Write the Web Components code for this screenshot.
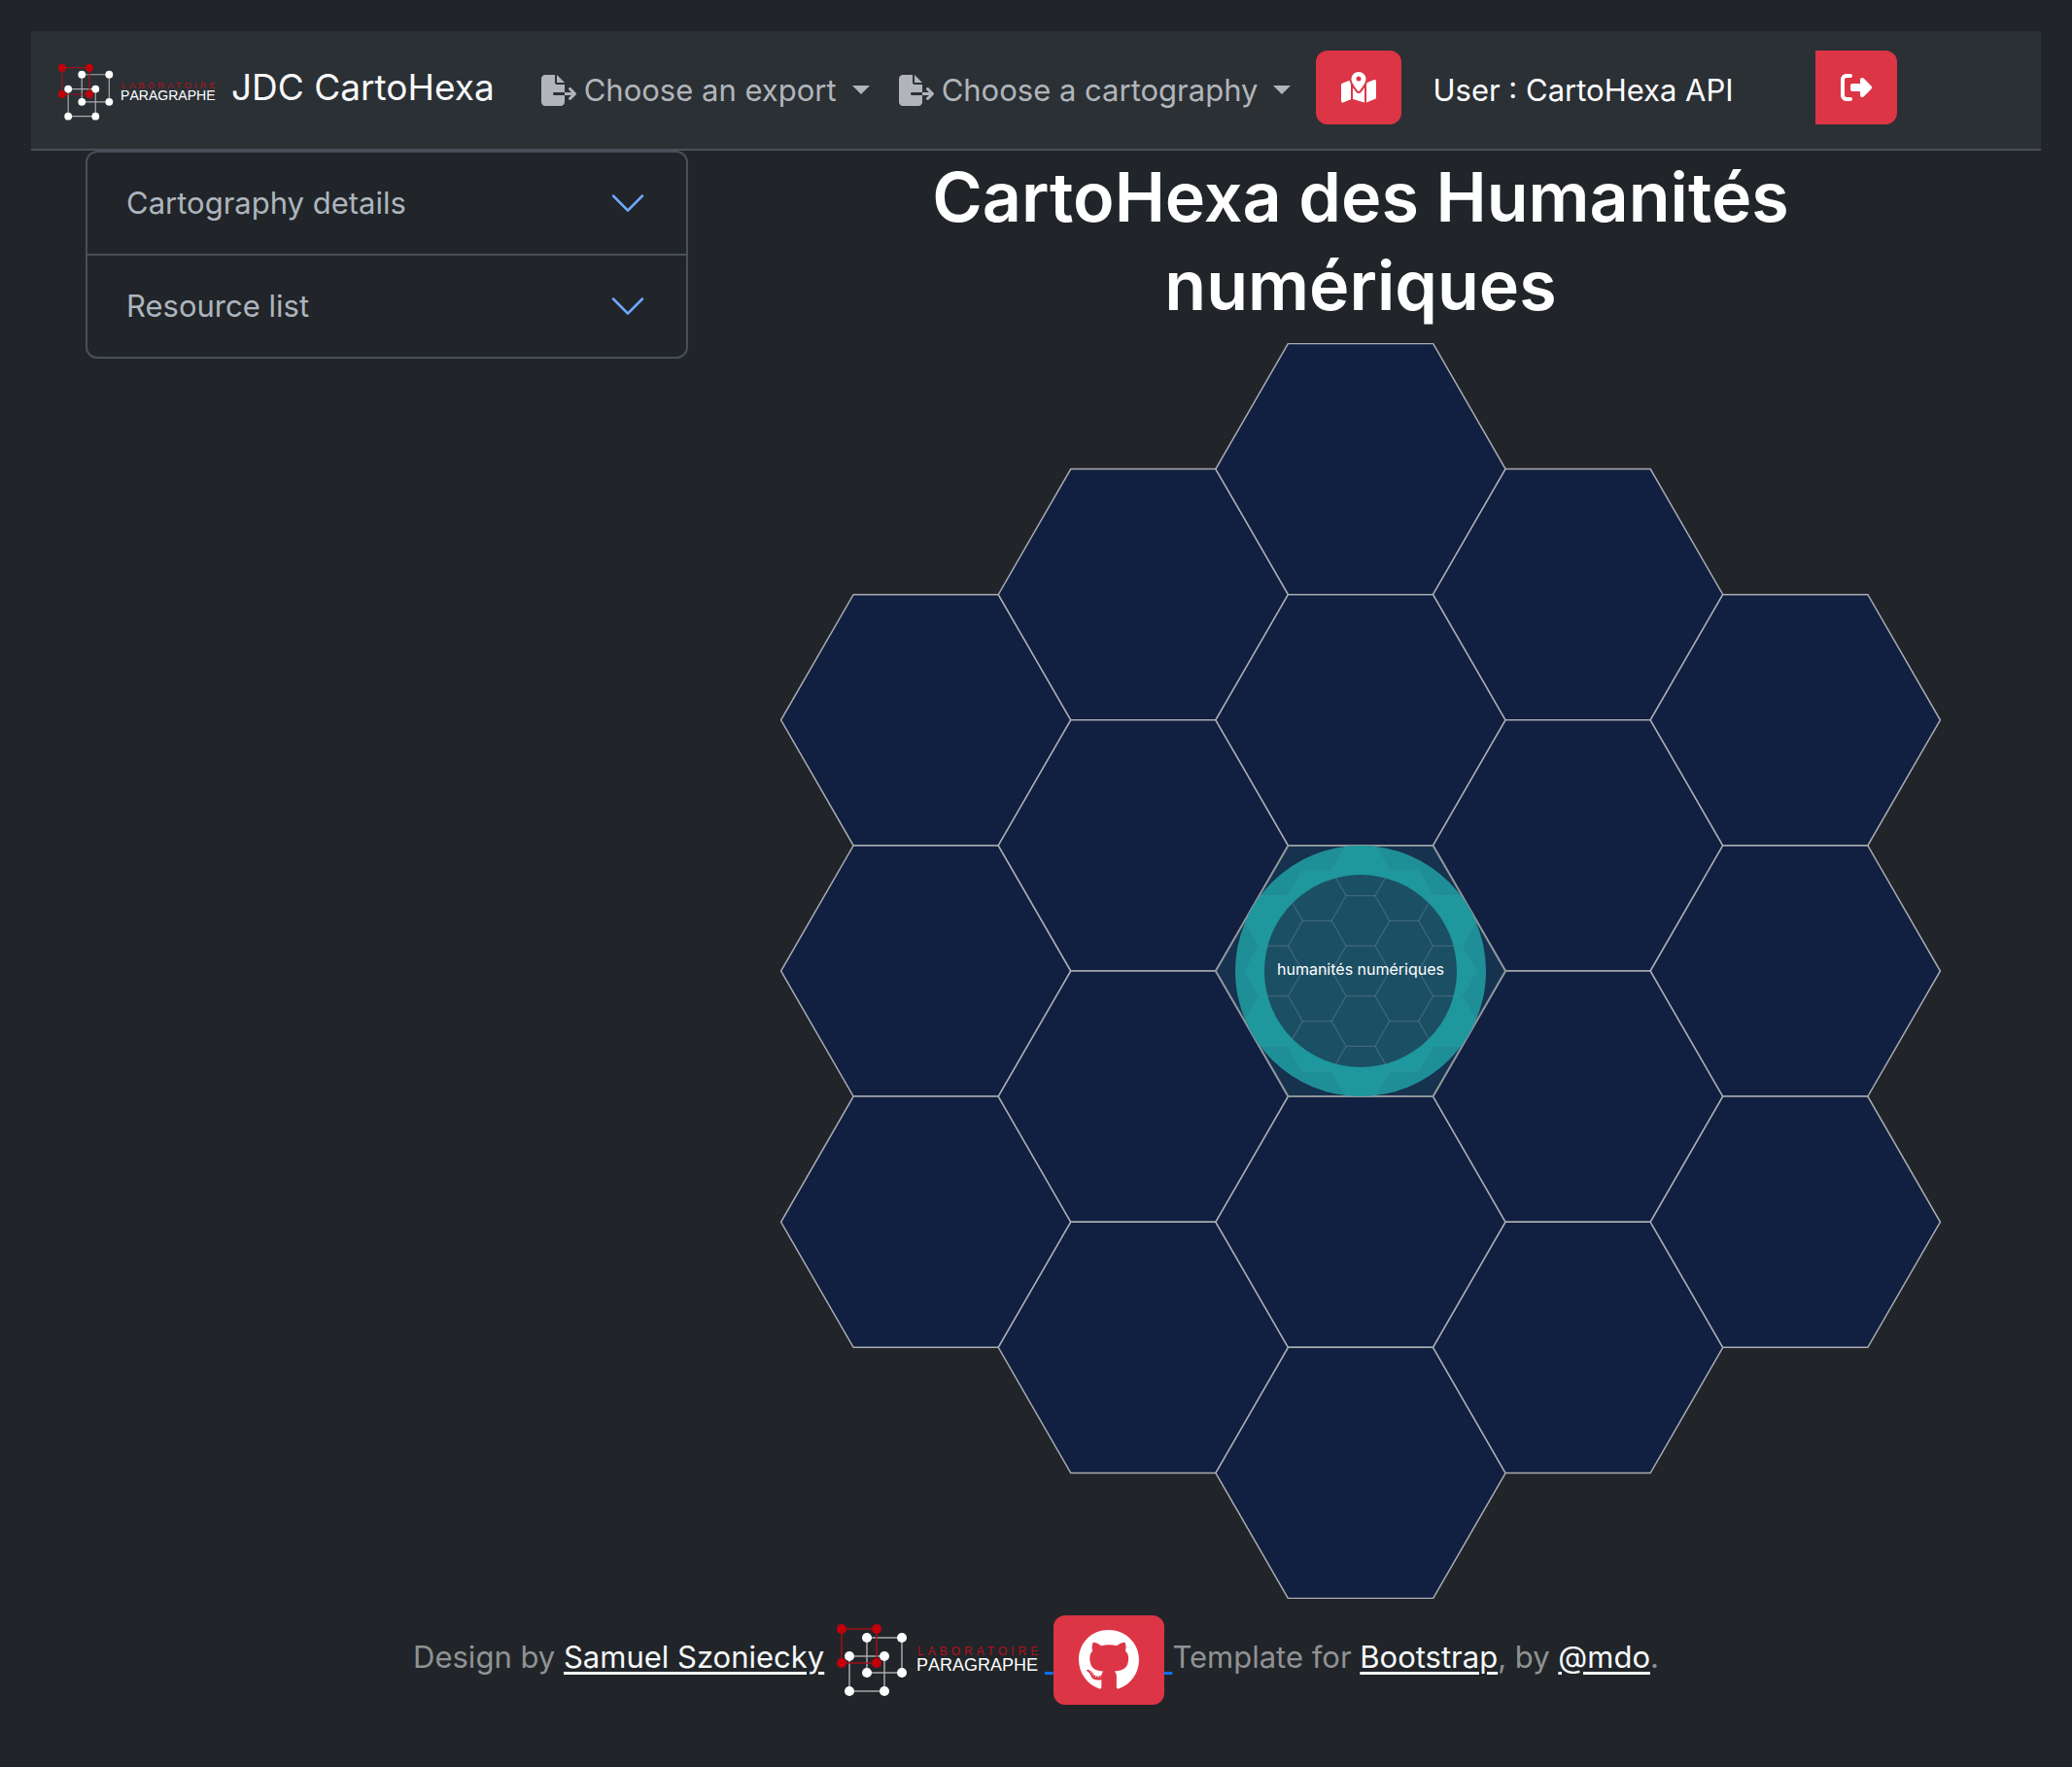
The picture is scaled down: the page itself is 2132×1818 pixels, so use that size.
<!DOCTYPE html>
<html lang="en" data-theme="dark">
<head>
<meta charset="utf-8">
<meta name="viewport" content="width=device-width, initial-scale=1">
<title>JDC CartoHexa</title>
<style>
  :root {
    --bg: #212529;
    --bar: #2b3035;
    --line: #495057;
    --muted: #adb5bd;
    --danger: #dc3545;
    --size: 31px;
  }
  body {
    margin: 0;
    padding: 32px;
    background: var(--bg);
    color: #fff;
    font: 400 var(--size)/48px Inter, "Liberation Sans", sans-serif;
  }
</style>
</head>
<body>
<carto-app></carto-app>

<template id="t-app">
  <style>
    :host { display: block; }
    main { display: grid; grid-template-columns: minmax(0, 1fr) minmax(0, 2fr); padding: 0 32px; align-items: start; }
    aside { padding: 0 24px; }
    section { padding: 0 24px; }
    h1 { margin: 0 0 14px; padding: 2px 80px 0; font-size: 70px; line-height: 91px; font-weight: 600; text-align: center; }
  </style>
  <carto-navbar></carto-navbar>
  <main>
    <aside>
      <carto-accordion>
        <accordion-item>Cartography details</accordion-item>
        <accordion-item>Resource list</accordion-item>
      </carto-accordion>
    </aside>
    <section>
      <h1>CartoHexa des Humanités numériques</h1>
      <hexa-map label="humanités numériques"></hexa-map>
    </section>
  </main>
  <carto-footer></carto-footer>
</template>

<template id="t-navbar">
  <style>
    :host { display: block; background: var(--bar); border-bottom: 2px solid var(--line); }
    nav { display: flex; align-items: center; height: 121px; padding: 0 28px 6px; box-sizing: border-box; }
    .brand { display: flex; align-items: center; gap: 14px; color: #f8f9fa; text-decoration: none; font-size: 37px; white-space: nowrap; }
    .brand paragraphe-logo { width: 164px; padding-top: 10px; }
    .menus { display: flex; gap: 30px; margin-left: 48px; padding-top: 6px; }
    .map { margin-left: 26px; }
    .user { margin-left: 32px; padding-top: 6px; white-space: nowrap; }
    .out { margin-left: 84px; }
  </style>
  <nav aria-label="Main">
    <a class="brand" href="#"><paragraphe-logo></paragraphe-logo>JDC CartoHexa</a>
    <div class="menus">
      <nav-dropdown>Choose an export</nav-dropdown>
      <nav-dropdown>Choose a cartography</nav-dropdown>
    </div>
    <icon-button class="map" icon="map" label="Show the map"></icon-button>
    <span class="user">User : CartoHexa API</span>
    <icon-button class="out" icon="logout" label="Log out" joined></icon-button>
  </nav>
</template>

<template id="t-dropdown">
  <style>
    :host { display: block; }
    button { all: unset; display: flex; align-items: center; color: #b1b5ba; cursor: pointer; white-space: nowrap; }
    svg { width: 36px; height: 32px; margin-right: 8px; fill: currentColor; }
    i { margin-left: 16px; border: 9px solid transparent; border-top-color: currentColor; border-bottom: 0; }
  </style>
  <button type="button" aria-haspopup="true">
    <svg viewBox="0 0 576 512" aria-hidden="true"><path d="M0 64C0 28.7 28.7 0 64 0H224V128c0 17.7 14.3 32 32 32H384V288H216c-13.3 0-24 10.7-24 24s10.7 24 24 24H384V448c0 35.3-28.7 64-64 64H64c-35.3 0-64-28.7-64-64V64zM384 336V288H494.1l-39-39c-9.4-9.4-9.4-24.6 0-33.9s24.6-9.4 33.9 0l80 80c9.4 9.4 9.4 24.6 0 33.9l-80 80c-9.4 9.4-24.6 9.4-33.9 0s-9.4-24.6 0-33.9l39-39H384zm0-208H256V0L384 128z"/></svg>
    <slot></slot><i></i>
  </button>
</template>

<template id="t-icon-button">
  <style>
    :host { display: block; }
    button { all: unset; display: flex; align-items: center; justify-content: center; box-sizing: border-box; height: 76px; padding: 0 26px; border-radius: 12px; background: var(--danger); color: #fff; cursor: pointer; }
    :host([joined]) button { border-radius: 0 12px 12px 0; }
    svg { display: block; height: 32px; fill: currentColor; }
  </style>
  <button type="button"></button>
</template>

<template id="t-logo">
  <style>
    :host { display: inline-block; }
    svg { display: block; width: 100%; }
    text { font-family: "Liberation Sans", Arial, sans-serif; }
    .tag { font-size: 12px; letter-spacing: 4px; fill: #b5101a; }
    .name { font-size: 18px; font-kerning: none; fill: #fff; }
  </style>
  <svg viewBox="0 0 210 76" role="img" aria-label="Laboratoire Paragraphe">
    <g fill="none" stroke="#fff" stroke-opacity=".6" stroke-width="1.5"><path d="M31 15H67V51H31zM13 34H49V70H13z"/></g>
    <path d="M5 6H41V41H5z" fill="none" stroke="#a01019" stroke-width="1.5"/>
    <g fill="#fff"><circle cx="31" cy="15" r="5"/><circle cx="67" cy="15" r="5"/><circle cx="31" cy="51" r="5"/><circle cx="67" cy="51" r="5"/><circle cx="13" cy="34" r="5"/><circle cx="49" cy="34" r="5"/><circle cx="13" cy="70" r="5"/><circle cx="49" cy="70" r="5"/></g>
    <g fill="#c4000b"><circle cx="5" cy="6" r="5"/><circle cx="41" cy="6" r="5"/><circle cx="5" cy="41" r="5"/><circle cx="41" cy="41" r="5"/></g>
    <text class="tag" x="83" y="33">LABORATOIRE</text>
    <text class="name" x="82" y="49">PARAGRAPHE</text>
  </svg>
</template>

<template id="t-accordion">
  <style>
    :host { display: block; border: 2px solid var(--line); border-radius: 12px; overflow: hidden; }
    ::slotted(:not(:first-child)) { border-top: 2px solid var(--line); }
  </style>
  <slot></slot>
</template>

<template id="t-accordion-item">
  <style>
    :host { display: block; }
    button { all: unset; display: flex; align-items: center; justify-content: space-between; box-sizing: border-box; width: 100%; height: 104px; padding: 0 40px; color: var(--muted); cursor: pointer; }
    svg { width: 40px; height: 40px; fill: #6ea8fe; }
  </style>
  <button type="button" aria-expanded="false">
    <span><slot></slot></span>
    <svg viewBox="0 0 16 16" aria-hidden="true"><path fill-rule="evenodd" d="M1.646 4.646a.5.5 0 0 1 .708 0L8 10.293l5.646-5.647a.5.5 0 0 1 .708.708l-6 6a.5.5 0 0 1-.708 0l-6-6a.5.5 0 0 1 0-.708z"/></svg>
  </button>
</template>

<template id="t-map">
  <style>
    :host { display: block; }
    svg { display: block; width: 100%; }
    .cell { fill: #111f41; stroke: #a9acb0; stroke-width: 1.5; }
    .core { fill: #16324e; stroke: #8e969a; stroke-width: 2; }
    .ring { fill: #1f8f97; }
    .sub { fill: #1e979d; stroke: #3a9ca4; stroke-opacity: .4; }
    .disc { fill: #1b4f64; }
    .mesh { fill: none; stroke: #9aa6b4; stroke-opacity: .16; stroke-width: 1.2; }
    text { font-size: 16px; font-weight: 400; fill: #fff; text-anchor: middle; }
  </style>
  <svg viewBox="-644 -646 1288 1292" role="img"></svg>
</template>

<template id="t-footer">
  <style>
    :host { display: block; padding: 17px 0 32px; text-align: center; color: #909294; }
    a { color: #f8f9fa; text-decoration-thickness: 3px; text-underline-offset: 4px; text-decoration-skip-ink: auto; }
    a.mark { color: #0d6efd; }
    paragraphe-logo { width: 210px; vertical-align: middle; margin: 0 4px; }
    .btn { display: inline-flex; align-items: center; justify-content: center; width: 114px; height: 92px; border-radius: 12px; background: var(--danger); color: #fff; vertical-align: middle; }
    .btn svg { width: 62px; height: 64px; fill: currentColor; }
  </style>
  <footer>Design by <a href="#">Samuel Szoniecky</a> <a class="mark" href="#"><paragraphe-logo></paragraphe-logo> </a><a class="mark" href="#" aria-label="GitHub"><span class="btn"><svg viewBox="0 0 496 512" aria-hidden="true"><path d="M165.9 397.4c0 2-2.3 3.6-5.2 3.6-3.3.3-5.6-1.3-5.6-3.6 0-2 2.3-3.6 5.2-3.6 3-.3 5.6 1.3 5.6 3.6zm-31.1-4.5c-.7 2 1.3 4.3 4.3 4.9 2.6 1 5.6 0 6.2-2s-1.3-4.3-4.3-5.2c-2.6-.7-5.5.3-6.2 2.3zm44.2-1.7c-2.9.7-4.9 2.6-4.6 4.9.3 2 2.9 3.3 5.9 2.6 2.9-.7 4.9-2.6 4.6-4.6-.3-1.9-3-3.2-5.9-2.9zM244.8 8C106.1 8 0 113.3 0 252c0 110.9 69.8 205.8 169.5 239.2 12.8 2.3 17.3-5.6 17.3-12.1 0-6.2-.3-40.4-.3-61.4 0 0-70 15-84.7-29.8 0 0-11.4-29.1-27.8-36.6 0 0-22.9-15.7 1.6-15.4 0 0 24.9 2 38.6 25.8 21.9 38.6 58.6 27.5 72.9 20.9 2.3-16 8.8-27.1 16-33.7-55.9-6.2-112.3-14.3-112.3-110.5 0-27.5 7.6-41.3 23.6-58.9-2.6-6.5-11.1-33.3 2.6-67.9 20.9-6.5 69 27 69 27 20-5.6 41.5-8.5 62.8-8.5s42.8 2.9 62.8 8.5c0 0 48.1-33.6 69-27 13.7 34.7 5.2 61.4 2.6 67.9 16 17.7 25.8 31.5 25.8 58.9 0 96.5-58.9 104.2-114.8 110.5 9.2 7.9 17 22.9 17 46.4 0 33.7-.3 75.4-.3 83.6 0 6.5 4.6 14.4 17.3 12.1C428.2 457.8 496 362.9 496 252 496 113.3 383.5 8 244.8 8zM97.2 352.9c-1.3 1-1 3.3.7 5.2 1.6 1.6 3.9 2.3 5.2 1 1.3-1 1-3.3-.7-5.2-1.6-1.6-3.9-2.3-5.2-1zm-10.8-8.1c-.7 1.3.3 2.9 2.3 3.9 1.6 1 3.6.7 4.3-.7.7-1.3-.3-2.9-2.3-3.9-2-.6-3.6-.3-4.3.7zm32.4 35.6c-1.6 1.3-1 4.3 1.3 6.2 2.3 2.3 5.2 2.6 6.5 1 1.3-1.3.7-4.3-1.3-6.2-2.2-2.3-5.2-2.6-6.5-1zm-11.4-14.7c-1.6 1-1.6 3.6 0 5.9 1.6 2.3 4.3 3.3 5.6 2.3 1.6-1.3 1.6-3.9 0-6.2-1.4-2.3-4-3.3-5.6-2z"/></svg></span> </a>Template for <a href="#">Bootstrap</a>, by <a href="#">@mdo</a>.</footer>
</template>

<script>
  class TemplateElement extends HTMLElement {
    constructor() {
      super();
      const source = document.getElementById(this.constructor.template);
      this.attachShadow({ mode: "open" }).append(source.content.cloneNode(true));
    }
  }
  const simple = (name, template) =>
    customElements.define(name, class extends TemplateElement { static template = template; });

  const ICONS = {
    map: ["0 0 576 512", "M408 120c0 54.6-73.1 151.9-105.2 192c-7.7 9.6-22 9.6-29.6 0C241.1 271.9 168 174.6 168 120C168 53.7 221.7 0 288 0s120 53.7 120 120zm8 80.4c3.5-6.9 6.7-13.8 9.6-20.6c.5-1.2 1-2.5 1.5-3.7l116-46.4C558.9 123.4 576 135 576 152V422.8c0 9.8-6 18.6-15.1 22.3L416 503V200.4zM137.6 138.3c2.4 14.1 7.2 28.3 12.8 41.5c2.9 6.8 6.1 13.7 9.6 20.6V451.8L32.9 502.7C17.1 509 0 497.4 0 480.4V209.6c0-9.8 6-18.6 15.1-22.3l122.6-49zM327.8 332c13.9-17.4 35.7-45.7 56.2-77V504.3L192 449.4V255c20.5 31.3 42.3 59.6 56.2 77c20.5 25.6 59.1 25.6 79.6 0zM288 152a40 40 0 1 0 0-80 40 40 0 1 0 0 80z"],
    logout: ["0 0 512 512", "M377.9 105.9L500.7 228.7c7.2 7.2 11.3 17.1 11.3 27.3s-4.1 20.1-11.3 27.3L377.9 406.1c-6.4 6.4-15 9.9-24 9.9c-18.7 0-33.9-15.2-33.9-33.9l0-62.1-128 0c-17.7 0-32-14.3-32-32l0-64c0-17.7 14.3-32 32-32l128 0 0-62.1c0-18.7 15.2-33.9 33.9-33.9c9 0 17.6 3.6 24 9.9zM160 96L96 96c-17.7 0-32 14.3-32 32l0 256c0 17.7 14.3 32 32 32l64 0c17.7 0 32 14.3 32 32s-14.3 32-32 32l-64 0c-53 0-96-43-96-96L0 128C0 75 43 32 96 32l64 0c17.7 0 32 14.3 32 32s-14.3 32-32 32z"]
  };

  class IconButton extends TemplateElement {
    static template = "t-icon-button";
    connectedCallback() {
      const [box, path] = ICONS[this.getAttribute("icon")];
      const button = this.shadowRoot.querySelector("button");
      button.setAttribute("aria-label", this.getAttribute("label"));
      button.innerHTML = `<svg viewBox="${box}" aria-hidden="true"><path d="${path}"/></svg>`;
    }
  }

  // Nineteen flat-topped cells in axial coordinates, two rings round the centre.
  class HexaMap extends TemplateElement {
    static template = "t-map";
    static cells(radius) {
      const list = [];
      for (let q = -2; q <= 2; q++)
        for (let r = Math.max(-2, -q - 2); r <= Math.min(2, 2 - q); r++)
          list.push([radius * 1.5 * q, radius * Math.sqrt(3) * (r + q / 2), q === 0 && r === 0]);
      return list;
    }
    static hexagon([cx, cy], radius, name) {
      const points = Array.from({ length: 6 }, (_, i) => {
        const a = i * Math.PI / 3;
        return `${(cx + radius * Math.cos(a)).toFixed(2)},${(cy + radius * Math.sin(a)).toFixed(2)}`;
      });
      return `<polygon class="${name}" points="${points.join(" ")}"/>`;
    }
    connectedCallback() {
      const R = 149.1, r = R / 5, { cells, hexagon } = HexaMap;
      const small = name => cells(r).map(c => hexagon(c, r, name)).join("");
      const label = this.getAttribute("label");
      const svg = this.shadowRoot.querySelector("svg");
      svg.setAttribute("aria-label", label);
      svg.innerHTML = `
        <defs><clipPath id="round"><circle r="129"/></clipPath><clipPath id="inner"><circle r="99"/></clipPath></defs>
        ${cells(R).filter(c => !c[2]).map(c => hexagon(c, R, "cell")).join("")}
        ${hexagon([0, 0], R, "core")}
        <circle class="ring" r="129"/>
        <g clip-path="url(#round)">${small("sub")}</g>
        <circle class="disc" r="99"/>
        <g clip-path="url(#inner)">${small("mesh")}</g>
        <text y="4">${label}</text>`;
    }
  }

  simple("paragraphe-logo", "t-logo");
  simple("nav-dropdown", "t-dropdown");
  customElements.define("icon-button", IconButton);
  simple("carto-navbar", "t-navbar");
  simple("accordion-item", "t-accordion-item");
  simple("carto-accordion", "t-accordion");
  customElements.define("hexa-map", HexaMap);
  simple("carto-footer", "t-footer");
  simple("carto-app", "t-app");
</script>
</body>
</html>
